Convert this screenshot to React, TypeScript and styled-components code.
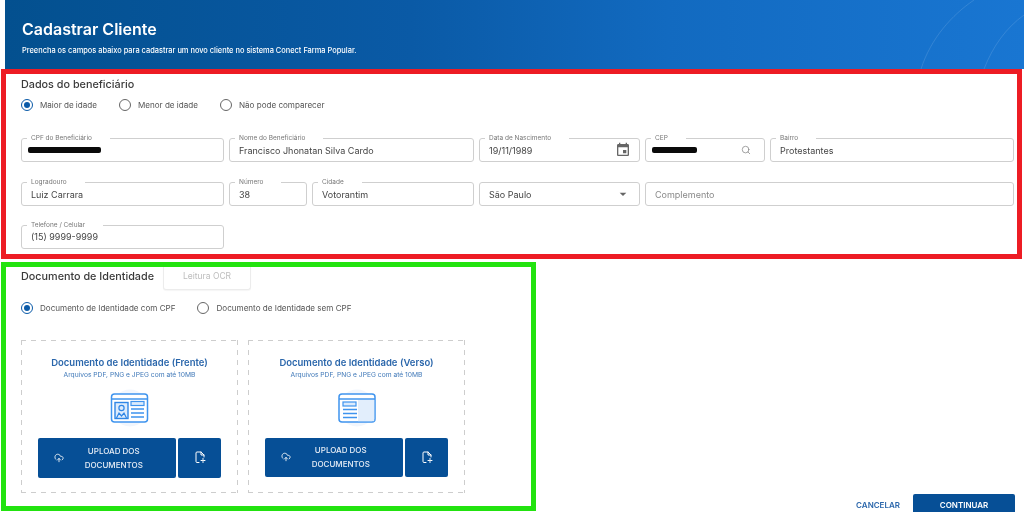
import React from "react";
import styled, { createGlobalStyle } from "styled-components";

const Global = createGlobalStyle`
  html, body { margin: 0; padding: 0; background: #fff; }
  * { box-sizing: border-box; }
  body { font-family: Inter, "Noto Sans", "Liberation Sans", sans-serif; }
`;

const Page = styled.div`
  width: 1024px;
  height: 512px;
  overflow: hidden;
  display: flex;
  flex-direction: column;
  background: #fff;
  filter: blur(0.35px);
`;

const Header = styled.header`
  position: relative;
  margin-left: 5px;
  height: 69px;
  flex: none;
  padding: 19px 0 0 17px;
  overflow: hidden;
  color: #fff;
  background: linear-gradient(90deg, #03508f 0%, #0a5aa6 40%, #126ac0 65%, #1976d2 100%);
`;

const Arcs = styled.svg`
  position: absolute;
  right: 0;
  top: 0;
`;

const Title = styled.h1`
  margin: 0;
  font-size: 16px;
  line-height: 20px;
  font-weight: 600;
`;

const Subtitle = styled.p`
  margin: 7px 0 0;
  font-size: 7.43px;
  line-height: 10px;
  font-weight: 500;
`;

const RedSection = styled.section`
  flex: none;
  margin-left: 1px;
  width: 1021px;
  height: 190px;
  border: 5px solid #ed1c24;
  padding: 1px 3px 0 15px;
`;

const SectionTitle = styled.h2`
  margin: 0;
  font-size: 10.8px;
  line-height: 20px;
  font-weight: 500;
  color: #3a3a3a;
`;

const RadioRow = styled.div<{ $top: number }>`
  display: flex;
  align-items: center;
  gap: 22px;
  height: 14px;
  margin-top: ${(p) => p.$top}px;
`;

const RadioItem = styled.label`
  display: flex;
  align-items: center;
  gap: 7px;
  font-size: 8.08px;
  color: #555;
`;

const RadioDot = styled.span<{ $on?: boolean }>`
  width: 12px;
  height: 12px;
  border-radius: 50%;
  display: flex;
  align-items: center;
  justify-content: center;
  border: 1px solid ${(p) => (p.$on ? "#0a5aa8" : "#666")};
  &::after {
    content: "";
    width: 6px;
    height: 6px;
    border-radius: 50%;
    background: ${(p) => (p.$on ? "#0a5aa8" : "transparent")};
  }
`;

const Fields = styled.div`
  margin-top: 26px;
`;

const FieldRow = styled.div<{ $gap: number }>`
  display: flex;
  gap: 5px;
  margin-bottom: ${(p) => p.$gap}px;
`;

const Field = styled.div<{ $w: number; $h?: number }>`
  position: relative;
  flex: none;
  width: ${(p) => p.$w}px;
  height: ${(p) => p.$h ?? 24}px;
  border: 1px solid #cfcfcf;
  border-radius: 3px;
  padding: 0 9px;
  display: flex;
  align-items: center;
  justify-content: space-between;
  font-size: 9px;
  color: #444;
`;

const FloatLabel = styled.span`
  position: absolute;
  left: 5px;
  top: -5px;
  background: #fff;
  padding: 0 18px 0 4px;
  font-size: 6.5px;
  line-height: 8px;
  color: #777;
  white-space: nowrap;
`;

const Placeholder = styled.span`
  color: #888;
`;

const Redaction = styled.span<{ $w: number }>`
  display: block;
  width: ${(p) => p.$w}px;
  height: 6px;
  margin-left: -3px;
  background: #0a0a0a;
  border-radius: 2px;
`;

const FieldIcon = styled.svg`
  flex: none;
  color: #666;
`;

const BottomRow = styled.div`
  display: flex;
  margin-top: 3px;
  height: 250px;
  flex: none;
`;

const GreenSection = styled.section`
  flex: none;
  margin-left: 1px;
  width: 535px;
  height: 249px;
  border: 5px solid #22e30f;
  padding: 0 0 0 15px;
`;

const DocHead = styled.div`
  display: flex;
  align-items: flex-start;
  gap: 9px;
  height: 23px;
`;

const DocTitle = styled(SectionTitle)`
  line-height: 18px;
  margin-top: 1px;
`;

const OcrButton = styled.button`
  width: 88px;
  height: 23px;
  padding: 0 0 5px;
  background: #fff;
  border: 1px solid #ececec;
  border-top: none;
  border-radius: 0 0 3px 3px;
  font: 400 8.5px Inter, sans-serif;
  color: #bdbdbd;
  box-shadow: 0 1px 1px rgba(0, 0, 0, 0.04);
`;

const Cards = styled.div`
  display: flex;
  gap: 10px;
  margin-top: 25px;
`;

const dash = "#cdcdcd";
const Card = styled.div<{ $h: number }>`
  width: 217px;
  height: ${(p) => p.$h}px;
  padding-top: 17px;
  display: flex;
  flex-direction: column;
  align-items: center;
  background-image: linear-gradient(90deg, ${dash} 55%, transparent 55%),
    linear-gradient(90deg, ${dash} 55%, transparent 55%),
    linear-gradient(${dash} 55%, transparent 55%),
    linear-gradient(${dash} 55%, transparent 55%);
  background-size: 10px 1px, 10px 1px, 1px 10px, 1px 10px;
  background-position: 0 0, 0 100%, 0 0, 100% 0;
  background-repeat: repeat-x, repeat-x, repeat-y, repeat-y;
`;

const CardTitle = styled.div`
  font-size: 9.5px;
  line-height: 12px;
  font-weight: 600;
  color: #2a66ab;
`;

const CardSub = styled.div`
  margin-top: 1px;
  font-size: 6.7px;
  line-height: 10px;
  color: #3f78b8;
`;

const Illustration = styled.svg`
  margin-top: 9px;
  flex: none;
`;

const Buttons = styled.div<{ $top: number }>`
  display: flex;
  gap: 2.5px;
  margin-top: ${(p) => p.$top}px;
`;

const UploadButton = styled.button`
  width: 138px;
  height: 39.5px;
  padding: 0 12px 0 16px;
  border: none;
  border-radius: 2px;
  background: #064f96;
  color: #e8eef6;
  display: flex;
  align-items: center;
  font: 500 8px/14px Inter, sans-serif;
`;

const UploadLabel = styled.span`
  flex: 1;
  text-align: center;
`;

const FileButton = styled.button`
  width: 43px;
  height: 39.5px;
  padding: 0;
  border: none;
  border-radius: 2px;
  background: #064f96;
  color: #fff;
  display: flex;
  align-items: center;
  justify-content: center;
`;

const Actions = styled.div`
  flex: 1;
  display: flex;
  justify-content: flex-end;
  align-items: center;
  gap: 13px;
  height: 22px;
  margin-top: 232px;
  padding-right: 9px;
`;

const CancelButton = styled.button`
  background: none;
  border: none;
  padding: 0;
  font: 600 8px Inter, sans-serif;
  color: #2a66ab;
`;

const ContinueButton = styled.button`
  width: 102px;
  height: 22px;
  border: none;
  border-radius: 2px 2px 0 0;
  background: #064f96;
  color: #fff;
  font: 600 8px Inter, sans-serif;
`;

const CloudIcon = () => (
  <svg width="10" height="10" viewBox="0 0 24 24" fill="none" stroke="#fff" strokeWidth="2" strokeLinecap="round" strokeLinejoin="round">
    <path d="M12 13v8" />
    <path d="M4 14.9A7 7 0 1 1 15.7 8h1.8a4.5 4.5 0 0 1 2.5 8.2" />
    <path d="m8 17 4-4 4 4" />
  </svg>
);

const FileIcon = () => (
  <svg width="12" height="13" viewBox="0 0 24 26" fill="none" stroke="#fff" strokeWidth="2" strokeLinecap="round" strokeLinejoin="round">
    <path d="M10 23H6a2 2 0 0 1-2-2V4a2 2 0 0 1 2-2h8l6 6v4" />
    <path d="M14 2v6h6" />
    <path d="M18 15v8M14 19h8" strokeDasharray="1.6 1.6" />
  </svg>
);

const IdFront = () => (
  <Illustration width="40" height="38" viewBox="0 0 40 38">
    <circle cx="20" cy="19" r="18.5" fill="#f1f6fd" />
    <rect x="1.5" y="5" width="36" height="28" rx="3" fill="#fff" stroke="#3f94ee" strokeWidth="1.5" />
    <path d="M1.5 10h36" stroke="#3f94ee" strokeWidth="1.5" />
    <rect x="5" y="13.5" width="13" height="16" fill="#dcebfc" stroke="#2f86e6" strokeWidth="1.4" />
    <circle cx="11.5" cy="19" r="2.6" fill="none" stroke="#2f86e6" strokeWidth="1.2" />
    <path d="M6.5 29l2.5-5 2.5 3 2.5-3 2.5 5" fill="none" stroke="#2f86e6" strokeWidth="1.2" />
    <rect x="21" y="12.5" width="13" height="4" fill="#dcebfc" stroke="#3f94ee" strokeWidth="1.2" />
    <path d="M21 20h13M21 24h13M21 28h13" stroke="#3f94ee" strokeWidth="1.3" />
  </Illustration>
);

const IdBack = () => (
  <Illustration width="40" height="38" viewBox="0 0 40 38">
    <circle cx="20" cy="19" r="18.5" fill="#f1f6fd" />
    <rect x="2" y="5" width="36" height="28" rx="3" fill="#fff" stroke="#3f94ee" strokeWidth="1.5" />
    <rect x="21" y="10.7" width="16.2" height="21.5" fill="#e2eefc" />
    <path d="M2 10h36" stroke="#3f94ee" strokeWidth="1.5" />
    <rect x="6" y="13" width="13" height="4" fill="#dcebfc" stroke="#3f94ee" strokeWidth="1.2" />
    <path d="M6 20.5h14M6 24.5h14M6 28.5h14" stroke="#3f94ee" strokeWidth="1.3" />
  </Illustration>
);

const UploadCard = ({ title, h, top, back }: { title: string; h: number; top: number; back?: boolean }) => (
  <Card $h={h}>
    <CardTitle>{title}</CardTitle>
    <CardSub>Arquivos PDF, PNG e JPEG com até 10MB</CardSub>
    {back ? <IdBack /> : <IdFront />}
    <Buttons $top={top}>
      <UploadButton>
        <CloudIcon />
        <UploadLabel>UPLOAD DOS DOCUMENTOS</UploadLabel>
      </UploadButton>
      <FileButton>
        <FileIcon />
      </FileButton>
    </Buttons>
  </Card>
);

export default function App() {
  return (
    <Page>
      <Global />
      <Header>
        <Arcs width="110" height="69" viewBox="0 0 110 69" fill="none" stroke="#ffffff" strokeOpacity="0.12">
          <path d="M7 69C17 38 38 15 60 0" />
          <path d="M70 69C79 46 92 28 110 15" />
        </Arcs>
        <Title>Cadastrar Cliente</Title>
        <Subtitle>Preencha os campos abaixo para cadastrar um novo cliente no sistema Conect Farma Popular.</Subtitle>
      </Header>

      <RedSection>
        <SectionTitle>Dados do beneficiário</SectionTitle>
        <RadioRow $top={3}>
          <RadioItem><RadioDot $on />Maior de idade</RadioItem>
          <RadioItem><RadioDot />Menor de idade</RadioItem>
          <RadioItem><RadioDot />Não pode comparecer</RadioItem>
        </RadioRow>
        <Fields>
          <FieldRow $gap={20}>
            <Field $w={203}><FloatLabel>CPF do Beneficiário</FloatLabel><Redaction $w={73} /></Field>
            <Field $w={245}><FloatLabel>Nome do Beneficiário</FloatLabel>Francisco Jhonatan Silva Cardo</Field>
            <Field $w={161}>
              <FloatLabel>Data de Nascimento</FloatLabel>19/11/1989
              <FieldIcon width="16" height="16" viewBox="0 0 24 24" fill="currentColor" style={{ marginRight: -1 }}>
                <path d="M17 12h-5v5h5v-5zM16 1v2H8V1H6v2H5c-1.11 0-1.99.9-1.99 2L3 19c0 1.1.89 2 2 2h14c1.1 0 2-.9 2-2V5c0-1.1-.9-2-2-2h-1V1h-2zm3 18H5V8h14v11z" />
              </FieldIcon>
            </Field>
            <Field $w={120}>
              <FloatLabel>CEP</FloatLabel><Redaction $w={45} />
              <FieldIcon width="10" height="10" viewBox="0 0 24 24" fill="none" stroke="#777" strokeWidth="1.6" strokeLinecap="round" style={{ marginRight: 4 }}>
                <circle cx="11" cy="11" r="8" />
                <path d="m21 21-4.3-4.3" />
              </FieldIcon>
            </Field>
            <Field $w={244}><FloatLabel>Bairro</FloatLabel>Protestantes</Field>
          </FieldRow>
          <FieldRow $gap={19}>
            <Field $w={203}><FloatLabel>Logradouro</FloatLabel>Luiz Carrara</Field>
            <Field $w={78}><FloatLabel>Número</FloatLabel>38</Field>
            <Field $w={162}><FloatLabel>Cidade</FloatLabel>Votorantim</Field>
            <Field $w={161}>
              São Paulo
              <FieldIcon width="16" height="16" viewBox="0 0 24 24" fill="currentColor" style={{ marginRight: -1 }}>
                <path d="M7 10l5 5 5-5z" />
              </FieldIcon>
            </Field>
            <Field $w={369}><Placeholder>Complemento</Placeholder></Field>
          </FieldRow>
          <FieldRow $gap={0}>
            <Field $w={203} $h={23.5}><FloatLabel>Telefone / Celular</FloatLabel>(15) 9999-9999</Field>
          </FieldRow>
        </Fields>
      </RedSection>

      <BottomRow>
        <GreenSection>
          <DocHead>
            <DocTitle>Documento de Identidade</DocTitle>
            <OcrButton>Leitura OCR</OcrButton>
          </DocHead>
          <RadioRow $top={11}>
            <RadioItem><RadioDot $on />Documento de Identidade com CPF</RadioItem>
            <RadioItem><RadioDot />Documento de Identidade sem CPF</RadioItem>
          </RadioRow>
          <Cards>
            <UploadCard title="Documento de Identidade (Frente)" h={153} top={11} />
            <UploadCard title="Documento de Identidade (Verso)" h={152.5} top={10.5} back />
          </Cards>
        </GreenSection>
        <Actions>
          <CancelButton>CANCELAR</CancelButton>
          <ContinueButton>CONTINUAR</ContinueButton>
        </Actions>
      </BottomRow>
    </Page>
  );
}
